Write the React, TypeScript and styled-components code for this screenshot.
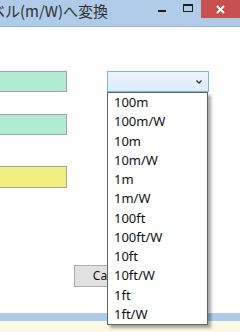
import React from "react"
import styled, { createGlobalStyle } from "styled-components"

const GlobalStyle = createGlobalStyle`
    html, body {
        margin: 0;
        padding: 0;
        width: 240px;
        height: 332px;
        overflow: hidden;
        background: #fbf9e6;
    }
`

const Screen = styled.div`
    display: flex;
    flex-direction: column;
    width: 240px;
    height: 332px;
    overflow: hidden;
    font-family: "Noto Sans", "Liberation Sans", sans-serif;
`

const Window = styled.div`
    display: flex;
    flex-direction: column;
    flex: 1;
    background: #afcbe8;
`

const TitleBar = styled.div`
    display: flex;
    align-items: flex-start;
    height: 26px;
    border-bottom: 1px solid #9db8d6;
`

const Title = styled.div`
    flex: 1;
    margin-left: -10px;
    padding-top: 2px;
    font-family: "Noto Sans CJK JP", sans-serif;
    font-size: 15px;
    line-height: 18px;
    color: #303030;
    white-space: nowrap;
`

const Controls = styled.div`
    display: flex;
`

const CaptionButton = styled.div<{ $close?: boolean }>`
    display: flex;
    align-items: center;
    justify-content: center;
    width: ${(p) => (p.$close ? "39px" : "26px")};
    height: 18px;
    background: ${(p) => (p.$close ? "#c75050" : "transparent")};
`

const MinIcon = styled.span`
    width: 8px;
    height: 2px;
    margin-top: 4px;
    background: #1e1e1e;
`

const MaxIcon = styled.span`
    box-sizing: border-box;
    width: 10px;
    height: 8px;
    margin-top: -3px;
    border: 1px solid #1e1e1e;
    border-top-width: 2px;
`

const Body = styled.div`
    display: flex;
    flex-direction: column;
    flex: 1;
    background: #fff;
    padding-top: 44px;
`

const Row = styled.div<{ $gap: number; $indent?: number }>`
    display: flex;
    align-items: flex-start;
    margin-top: ${(p) => p.$gap}px;
    margin-left: ${(p) => p.$indent ?? 0}px;
`

const Field = styled.div<{ $tone: "green" | "yellow" }>`
    box-sizing: border-box;
    width: 81px;
    height: ${(p) => (p.$tone === "yellow" ? 22 : 21)}px;
    margin-left: -14px;
    border: 1px solid #a3a3a3;
    background: ${(p) => (p.$tone === "yellow" ? "#f1ef80" : "#b1ebd4")};
`

const SelectWrap = styled.div`
    position: relative;
    margin-left: 40px;
`

const SelectBox = styled.div`
    box-sizing: border-box;
    display: flex;
    align-items: center;
    justify-content: flex-end;
    width: 102px;
    height: 21px;
    padding-right: 6px;
    border: 1px solid #7eb4ea;
    background: linear-gradient(#ecf4fc, #dcecfc);
`

const DropList = styled.ul`
    position: absolute;
    top: 100%;
    left: 0;
    z-index: 2;
    box-sizing: border-box;
    width: 101px;
    margin: 0;
    padding: 0;
    list-style: none;
    background: #fff;
    border: 1px solid #646464;
    box-shadow: 3px 3px 3px rgba(0, 0, 0, 0.35);
`

const DropItem = styled.li`
    height: 19.25px;
    padding-left: 6px;
    font-size: 13px;
    line-height: 19.25px;
    color: #111;
`

const PushButton = styled.div`
    box-sizing: border-box;
    width: 75px;
    height: 22px;
    border: 1px solid #adadad;
    background: #e1e1e1;
    font-size: 12px;
    line-height: 20px;
    text-align: center;
    color: #111;
`

const FrameEdge = styled.div`
    height: 8px;
    background: #afcbe8;
`

const Backdrop = styled.div`
    height: 11px;
    background: #fbf9e6;
`

const units = [
    "100m",
    "100m/W",
    "10m",
    "10m/W",
    "1m",
    "1m/W",
    "100ft",
    "100ft/W",
    "10ft",
    "10ft/W",
    "1ft",
    "1ft/W",
]

export default function App() {
    return (
        <>
            <GlobalStyle />
            <Screen>
                <Window>
                    <TitleBar>
                        <Title>ベル(m/W)へ変換</Title>
                        <Controls>
                            <CaptionButton>
                                <MinIcon />
                            </CaptionButton>
                            <CaptionButton>
                                <MaxIcon />
                            </CaptionButton>
                            <CaptionButton $close>
                                <svg width="9" height="9" viewBox="0 0 9 9">
                                    <path
                                        d="M1 1 L8 8 M8 1 L1 8"
                                        stroke="#fff"
                                        strokeWidth="2"
                                    />
                                </svg>
                            </CaptionButton>
                        </Controls>
                    </TitleBar>
                    <Body>
                        <Row $gap={0}>
                            <Field $tone="green" />
                            <SelectWrap>
                                <SelectBox>
                                    <svg width="6" height="4" viewBox="0 0 6 4">
                                        <path
                                            d="M0.5 0.5 L3 3 L5.5 0.5"
                                            stroke="#333"
                                            strokeWidth="1.4"
                                            fill="none"
                                        />
                                    </svg>
                                </SelectBox>
                                <DropList>
                                    {units.map((u) => (
                                        <DropItem key={u}>{u}</DropItem>
                                    ))}
                                </DropList>
                            </SelectWrap>
                        </Row>
                        <Row $gap={22}>
                            <Field $tone="green" />
                        </Row>
                        <Row $gap={31}>
                            <Field $tone="yellow" />
                        </Row>
                        <Row $gap={77} $indent={74}>
                            <PushButton>Cancel</PushButton>
                        </Row>
                    </Body>
                    <FrameEdge />
                </Window>
                <Backdrop />
            </Screen>
        </>
    )
}
